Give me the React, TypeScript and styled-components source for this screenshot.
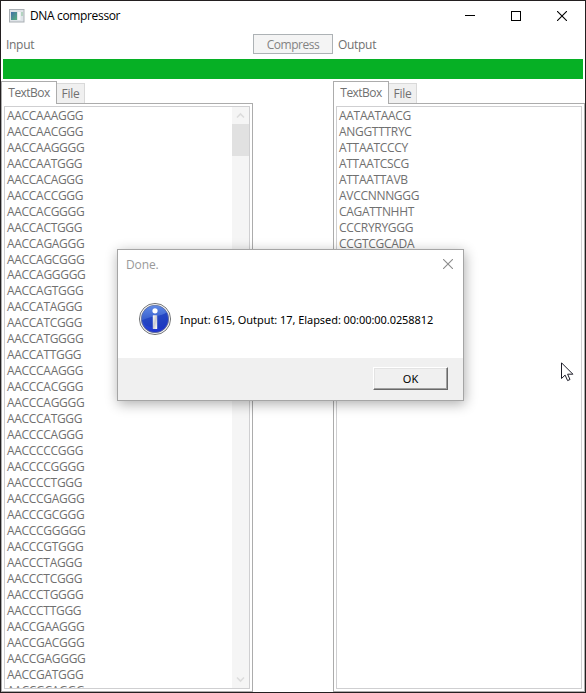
import React from "react";
import styled, { createGlobalStyle } from "styled-components";

const Global = createGlobalStyle`
  * { box-sizing: border-box; }
  html, body { margin: 0; padding: 0; overflow: hidden; }
  body { font-family: "Open Sans", "Noto Sans", sans-serif; font-size: 12px; color: #000; }
`;

const Window = styled.main`
  position: relative;
  display: flex;
  flex-direction: column;
  width: 586px;
  height: 693px;
  background: #fff;
  border: 1px solid #231f20;
  overflow: hidden;
`;

const TitleBar = styled.header`
  display: flex;
  align-items: center;
  flex: none;
  height: 29px;
  padding-left: 8px;
`;

const Title = styled.h1<{ $dim?: boolean }>`
  flex: 1;
  margin: 0;
  font-size: 12px;
  font-weight: 400;
  line-height: 16px;
  letter-spacing: ${(p) => (p.$dim ? -0.1 : -0.35)}px;
  white-space: nowrap;
  color: ${(p) => (p.$dim ? "#999" : "#000")};
`;

const AppIcon = styled.svg`
  flex: none;
  width: 16px;
  height: 14px;
  margin-right: 5px;
`;

const CaptionButton = styled.button<{ $narrow?: boolean }>`
  display: flex;
  align-items: center;
  justify-content: center;
  width: ${(p) => (p.$narrow ? 30 : 46)}px;
  height: ${(p) => (p.$narrow ? 28 : 29)}px;
  margin-bottom: ${(p) => (p.$narrow ? 1 : 0)}px;
  padding: 0;
  border: 0;
  background: transparent;
`;

const CommandRow = styled.div`
  display: grid;
  grid-template-columns: 252px 80px 1fr;
  align-items: center;
  flex: none;
  height: 29px;
  color: #707070;
`;

const Label = styled.span`
  padding-left: 5px;
  line-height: 16px;
  letter-spacing: -0.3px;
`;

const CompressButton = styled.button`
  height: 20px;
  margin-bottom: 1px;
  padding: 1px 0 0;
  border: 1px solid #adb2b5;
  background: #f4f4f4;
  color: #838383;
  font: inherit;
  line-height: 16px;
  letter-spacing: -0.45px;
`;

const Progress = styled.div`
  flex: none;
  height: 20px;
  margin: 0 2px;
  background: #06b025;
`;

const Columns = styled.div`
  display: flex;
  justify-content: space-between;
  flex: 1;
  min-height: 0;
  padding-top: 2px;
`;

const TabControl = styled.section`
  display: flex;
  flex-direction: column;
  width: 252px;
`;

const TabStrip = styled.div`
  display: flex;
  align-items: flex-end;
  flex: none;
  height: 23px;
  margin-bottom: -1px;
`;

const Tab = styled.button<{ $active?: boolean }>`
  position: relative;
  width: ${(p) => (p.$active ? 56 : 28)}px;
  height: ${(p) => (p.$active ? 23 : 20)}px;
  margin-bottom: ${(p) => (p.$active ? 0 : 1)}px;
  padding: 0;
  border: 1px solid ${(p) => (p.$active ? "#acacac" : "#d9d9d9")};
  border-bottom: 0;
  border-left-width: ${(p) => (p.$active ? 1 : 0)}px;
  background: ${(p) => (p.$active ? "#fff" : "#f0f0f0")};
  color: #707070;
  font: inherit;
  line-height: 16px;
  letter-spacing: ${(p) => (p.$active ? -0.55 : -0.25)}px;
`;

const TabPanel = styled.div`
  flex: 1;
  min-height: 0;
  padding: 2px;
  border: 1px solid #acacac;
`;

const TextArea = styled.div`
  display: flex;
  height: 583px;
  border: 1px solid #cfcfd1;
  overflow: hidden;
`;

const Lines = styled.div`
  flex: 1;
  padding: 0.81px 0 0 2px;
  color: #707070;
  line-height: 15.97px;
  letter-spacing: -0.3px;
  white-space: nowrap;
`;

const Line = styled.div``;

const ScrollBar = styled.div`
  display: flex;
  flex-direction: column;
  width: 17px;
  background: #f5f5f5;
`;

const ScrollArrow = styled.div`
  display: flex;
  align-items: center;
  justify-content: center;
  height: 17px;
`;

const Track = styled.div`
  flex: 1;
`;

const Thumb = styled.div`
  height: 32px;
  background: #e1e1e1;
`;

const Dialog = styled.div`
  position: absolute;
  left: 116px;
  top: 248px;
  display: flex;
  flex-direction: column;
  width: 347px;
  height: 152px;
  border: 1px solid #a5a5a5;
  background: #fff;
  box-shadow: 1px 3px 12px rgba(0, 0, 0, 0.32);
`;

const DialogBody = styled.div`
  display: flex;
  align-items: center;
  flex: 1;
  gap: 8px;
  padding: 0 0 0 20px;
  white-space: nowrap;
`;

const Message = styled.p`
  margin: 1px 0 0;
  font-family: "Noto Sans", sans-serif;
  font-size: 11px;
  line-height: 15px;
  letter-spacing: -0.06px;
`;

const DialogFooter = styled.footer`
  display: flex;
  justify-content: flex-end;
  flex: none;
  height: 42px;
  padding: 9px 15px 0 0;
  background: #f0f0f0;
`;

const OkButton = styled.button`
  width: 75px;
  height: 23px;
  padding: 0;
  border: 1px solid;
  border-color: #fff #696969 #696969 #fff;
  box-shadow: inset -1px -1px #a0a0a0, inset 1px 1px #e3e3e3;
  background: #f0f0f0;
  color: #000;
  font-size: 11px;
  font-family: "Noto Sans", sans-serif;
`;

const Pointer = styled.svg`
  position: absolute;
  left: 560px;
  top: 361px;
  width: 13px;
  height: 21px;
`;

const inputLines = [
  "AACCAAAGGG", "AACCAACGGG", "AACCAAGGGG", "AACCAATGGG", "AACCACAGGG", "AACCACCGGG",
  "AACCACGGGG", "AACCACTGGG", "AACCAGAGGG", "AACCAGCGGG", "AACCAGGGGG", "AACCAGTGGG",
  "AACCATAGGG", "AACCATCGGG", "AACCATGGGG", "AACCATTGGG", "AACCCAAGGG", "AACCCACGGG",
  "AACCCAGGGG", "AACCCATGGG", "AACCCCAGGG", "AACCCCCGGG", "AACCCCGGGG", "AACCCCTGGG",
  "AACCCGAGGG", "AACCCGCGGG", "AACCCGGGGG", "AACCCGTGGG", "AACCCTAGGG", "AACCCTCGGG",
  "AACCCTGGGG", "AACCCTTGGG", "AACCGAAGGG", "AACCGACGGG", "AACCGAGGGG", "AACCGATGGG",
  "AACCGCAGGG",
];

const outputLines = [
  "AATAATAACG", "ANGGTTTRYC", "ATTAATCCCY", "ATTAATCSCG", "ATTAATTAVB", "AVCCNNNGGG",
  "CAGATTNHHT", "CCCRYRYGGG", "CCGTCGCADA",
];

function Chevron({ down }: { down?: boolean }) {
  return (
    <svg width="9" height="7" viewBox="0 0 9 7" fill="none" stroke="#dcdcdc" strokeWidth="1.6">
      <path d={down ? "M1 1.5 4.5 5 8 1.5" : "M1 5.5 4.5 2 8 5.5"} />
    </svg>
  );
}

function CloseGlyph({ color }: { color: string }) {
  return (
    <svg width="10" height="10" viewBox="0 0 10 10" stroke={color} strokeWidth="1.1">
      <path d="M0 0 10 10M10 0 0 10" />
    </svg>
  );
}

function TextTabs({ lines, scroll }: { lines: string[]; scroll?: boolean }) {
  return (
    <TabControl>
      <TabStrip>
        <Tab $active>TextBox</Tab>
        <Tab>File</Tab>
      </TabStrip>
      <TabPanel>
        <TextArea>
          <Lines>
            {lines.map((line) => (
              <Line key={line}>{line}</Line>
            ))}
          </Lines>
          {scroll && (
            <ScrollBar>
              <ScrollArrow><Chevron /></ScrollArrow>
              <Track><Thumb /></Track>
              <ScrollArrow><Chevron down /></ScrollArrow>
            </ScrollBar>
          )}
        </TextArea>
      </TabPanel>
    </TabControl>
  );
}

function InfoIcon() {
  return (
    <svg width="34" height="34" viewBox="0 0 34 34">
      <defs>
        <linearGradient id="blue" x1="0" y1="0" x2="0.3" y2="1">
          <stop offset="0" stopColor="#3f70dc" />
          <stop offset="1" stopColor="#1f36cf" />
        </linearGradient>
        <linearGradient id="gloss" x1="0" y1="0" x2="0" y2="1">
          <stop offset="0" stopColor="#6b95ea" />
          <stop offset="1" stopColor="#3a61c9" />
        </linearGradient>
        <linearGradient id="stem" x1="0" y1="0" x2="1" y2="1">
          <stop offset="0" stopColor="#fff" />
          <stop offset="0.5" stopColor="#c9c9cf" />
          <stop offset="1" stopColor="#fff" />
        </linearGradient>
      </defs>
      <circle cx="17" cy="17" r="15.6" fill="#f4f4f4" stroke="#77797b" strokeWidth="1" />
      <circle cx="17" cy="17" r="13.7" fill="url(#blue)" stroke="#69718c" strokeWidth="0.8" />
      <path d="M3.8 18.5A13.2 13.2 0 0 1 28.5 10.5C24 14.5 13 13.5 3.8 18.5Z" fill="url(#gloss)" opacity="0.75" />
      <path d="M3.8 18.5C13 13.5 24 14.5 28.5 10.5L30 18C29 22 27 25 24 27L8 24Z" fill="#1738a8" opacity="0.4" />
      <circle cx="17" cy="8.8" r="2.6" fill="#fff" />
      <rect x="14.8" y="13.3" width="4.4" height="13.7" rx="0.5" fill="url(#stem)" />
    </svg>
  );
}

export default function App() {
  return (
    <>
      <Global />
      <Window>
        <TitleBar>
          <AppIcon viewBox="0 0 16 14">
            <defs>
              <linearGradient id="pane" x1="0" y1="0" x2="1" y2="1">
                <stop offset="0" stopColor="#3f6fa8" />
                <stop offset="1" stopColor="#58b17c" />
              </linearGradient>
            </defs>
            <rect x="0.5" y="0.5" width="14.5" height="12.5" fill="#dfe4e8" stroke="#a9afb4" />
            <rect x="2" y="3" width="6" height="8" fill="url(#pane)" />
            <rect x="9" y="3" width="2.5" height="8" fill="#f6f8fa" />
            <rect x="12" y="3" width="2" height="4" fill="#b3d4c0" />
          </AppIcon>
          <Title>DNA compressor</Title>
          <CaptionButton aria-label="Minimize">
            <svg width="10" height="10" viewBox="0 0 10 10" shapeRendering="crispEdges">
              <rect y="4" width="10" height="1" />
            </svg>
          </CaptionButton>
          <CaptionButton aria-label="Maximize">
            <svg width="10" height="10" viewBox="0 0 10 10" fill="none" stroke="#000">
              <rect x="0.5" y="0.5" width="9" height="9" />
            </svg>
          </CaptionButton>
          <CaptionButton aria-label="Close"><CloseGlyph color="#000" /></CaptionButton>
        </TitleBar>
        <CommandRow>
          <Label>Input</Label>
          <CompressButton>Compress</CompressButton>
          <Label>Output</Label>
        </CommandRow>
        <Progress />
        <Columns>
          <TextTabs lines={inputLines} scroll />
          <TextTabs lines={outputLines} />
        </Columns>
        <Dialog role="dialog">
          <TitleBar>
            <Title $dim>Done.</Title>
            <CaptionButton $narrow aria-label="Close"><CloseGlyph color="#8c8c8c" /></CaptionButton>
          </TitleBar>
          <DialogBody>
            <InfoIcon />
            <Message>Input: 615, Output: 17, Elapsed: 00:00:00.0258812</Message>
          </DialogBody>
          <DialogFooter>
            <OkButton>OK</OkButton>
          </DialogFooter>
        </Dialog>
        <Pointer viewBox="0 0 13 21">
          <path
            d="M0.5 0.8V16.5L4.1 13.1 6.6 18.6 9 17.5 6.6 12.2H11.9Z"
            fill="#fff"
            stroke="#1c1c28"
            strokeWidth="1"
          />
        </Pointer>
      </Window>
    </>
  );
}
